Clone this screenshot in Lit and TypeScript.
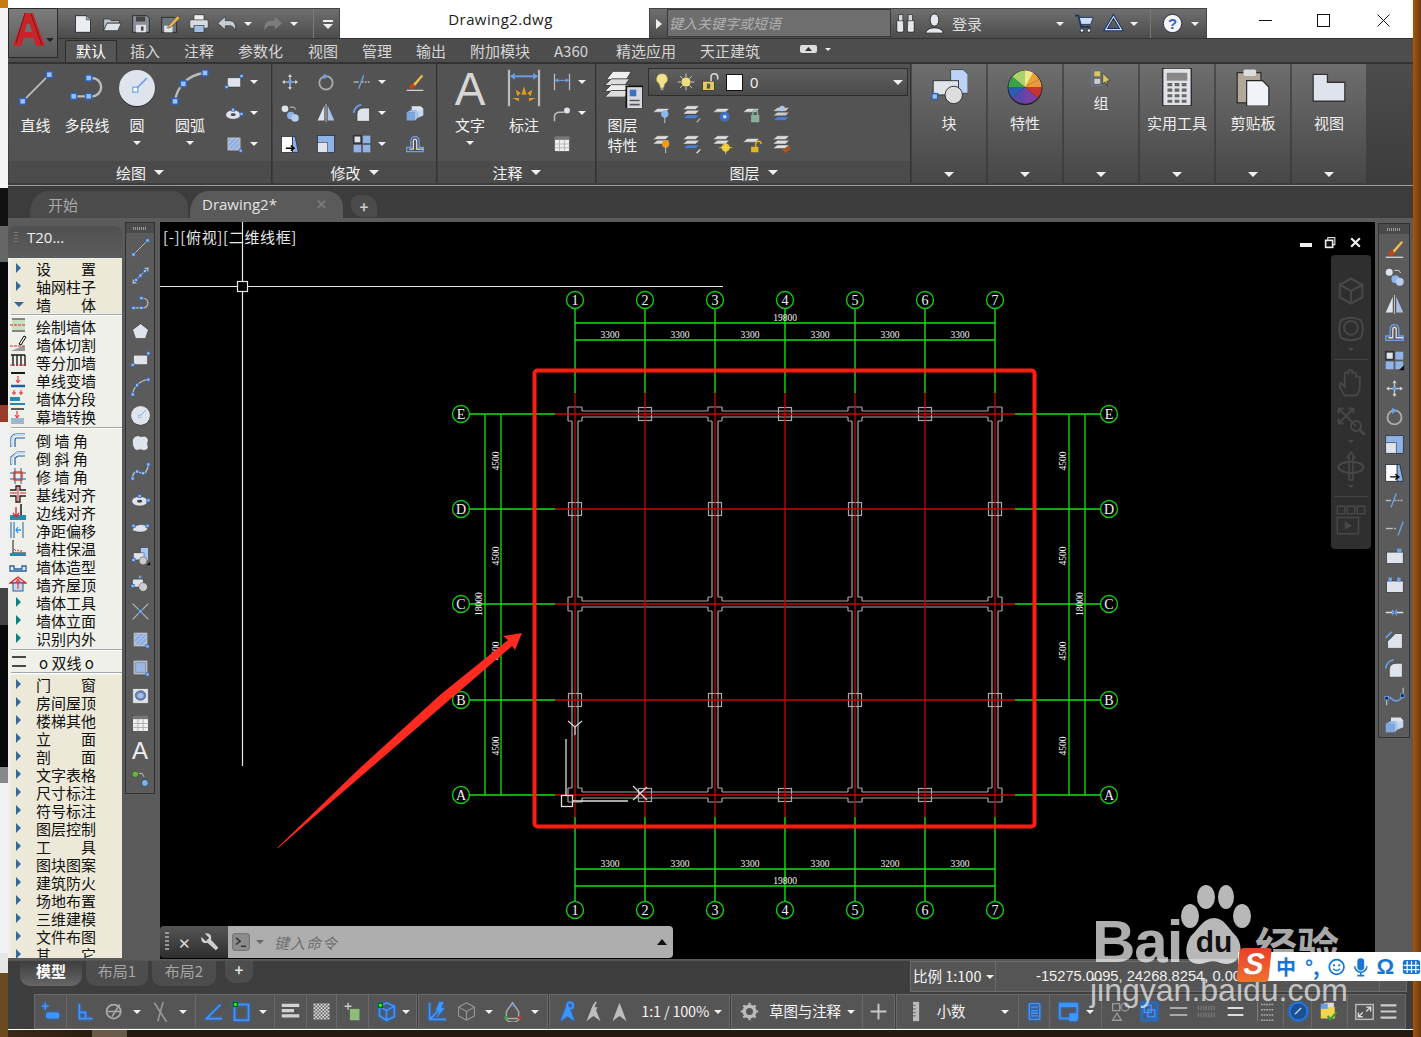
import { LitElement, html, css, svg } from "lit";
import { customElement } from "lit/decorators.js";

const BL = "#6b9fe8", LT = "#dfe3ec", GR = "#bcbcbc";
const grip = (x: number, y: number) => svg`<rect x=${x - 1.8} y=${y - 1.8} width="3.6" height="3.6" fill="#9cc0f5" stroke="#2f62b5" stroke-width=".9"/>`;
const slab = (y: number, c = "#ddd") => svg`<path d="M2 ${y}l5-4h13l-4 4z" fill=${c} stroke="#444" stroke-width=".5"/>`;

const ICONS: Record<string, any> = {
  line: svg`<path d="M4 20L20 4" stroke=${GR} stroke-width="1.1"/>${grip(4, 20)}${grip(20, 4)}`,
  xline: svg`<path d="M3 21L21 3" stroke=${GR} stroke-width="1.3"/><path d="M3 21v-5l5 5zM21 3v5l-5-5z" fill=${GR}/>${grip(12, 12)}${grip(7, 17)}${grip(17, 7)}`,
  pline: svg`<path d="M4 17H15A5.5 5.5 0 0 0 15 6" fill="none" stroke=${GR} stroke-width="1.4"/>${grip(4, 17)}${grip(13, 17)}${grip(13, 6)}`,
  circle: svg`<circle cx="12" cy="12.5" r="11" fill="#333"/><circle cx="12" cy="12" r="10.8" fill=${LT}/><path d="M11 13L18 6" stroke=${BL} stroke-width="1"/><rect x="9.5" y="11.5" width="3" height="3" fill="#fff" stroke=${BL} stroke-width=".7"/>`,
  arc: svg`<path d="M3 20C4 12 10 4 21 3" fill="none" stroke=${GR} stroke-width="1.4"/>${grip(3, 20)}${grip(8, 9.5)}${grip(21, 3)}`,
  rect: svg`<rect x="4" y="7" width="16" height="11" fill=${LT} stroke="#333" stroke-width=".6"/>${grip(3, 18)}${grip(21, 5)}`,
  ell: svg`<ellipse cx="11" cy="14" rx="9" ry="5.5" fill=${LT} stroke="#333" stroke-width=".6"/><ellipse cx="11" cy="14" rx="3" ry="1.6" fill="#444"/>${grip(11, 8)}${grip(21, 13)}`,
  ellarc: svg`<path d="M3 15C3 8 19 6 20 13 20 18 8 18 6 16" fill=${LT} stroke="#333" stroke-width=".6"/>${grip(4, 10)}${grip(20, 10)}`,
  hatch: svg`<rect x="5" y="5" width="14" height="14" fill="#8eaee0" stroke=${GR} stroke-width="1.6"/><path d="M5 11l6-6M5 17L17 5M8 19L19 8M14 19l5-5" stroke="#c9daf5" stroke-width=".9"/>${grip(20, 20)}`,
  region: svg`<rect x="5" y="5" width="14" height="14" fill="#7b97c8" stroke=${GR} stroke-width="1.8"/><rect x="7" y="7" width="10" height="10" fill="#9db7e2"/>${grip(20, 20)}`,
  wipe: svg`<rect x="3" y="4" width="18" height="17" rx="1" fill=${LT} stroke="#333" stroke-width=".6"/><ellipse cx="12" cy="12" rx="6" ry="5.5" fill="#5f86c2" stroke="#333" stroke-width=".5"/><ellipse cx="12" cy="12" rx="3.6" ry="3" fill=${LT} opacity=".6"/>`,
  polygon: svg`<path d="M12 3l9 7-3.4 10H6.4L3 10z" fill=${LT} stroke="#333" stroke-width=".6"/>`,
  cloud: svg`<path d="M6 4c3-2 5 0 7 0s5-1 7 2 0 4 0 6 2 5-1 7-5 0-7 0-5 2-7-1-2-4-2-6-1-4 1-6 1-2 2-2z" fill=${LT} stroke="#333" stroke-width=".6"/>`,
  spline: svg`<path d="M3 20C3 10 10 12 13 14S20 12 21 4" fill="none" stroke=${GR} stroke-width="1.7"/>${grip(3, 20)}${grip(8, 12)}${grip(15, 14)}${grip(21, 4)}`,
  insert: svg`<rect x="12" y="3" width="9" height="15" fill="#a9c6f2" stroke="#333" stroke-width=".5"/><rect x="4" y="9" width="12" height="8" fill=${LT} stroke="#333" stroke-width=".5"/><circle cx="15" cy="18" r="4.5" fill="#ccc" stroke="#333" stroke-width=".5"/>${grip(4, 17)}<path d="M19 23l4-4v4z" fill="#111"/>`,
  block: svg`<rect x="3" y="7" width="12" height="9" fill=${LT} stroke="#333" stroke-width=".5"/><circle cx="15" cy="16" r="5" fill="#ccc" stroke="#333" stroke-width=".5"/>${grip(3, 15)}<rect x="10" y="3" width="3" height="3" fill=${BL}/>`,
  point: svg`<path d="M3 21L21 3M3 3l18 18" stroke=${GR} stroke-width="1.2"/>${grip(12, 12)}`,
  table: svg`<rect x="3" y="3" width="18" height="18" fill="#efefef" stroke="#333" stroke-width=".7"/><rect x="3" y="3" width="18" height="4" fill="#777"/><path d="M3 12h18M3 16.500h18M9 7v14M15 7v14" stroke="#aaa" stroke-width="1"/>`,
  addsel: svg`<circle cx="6" cy="6" r="3.6" fill="#6db33f" stroke="#234" stroke-width=".6"/><path d="M10 5h4l2 4" fill="none" stroke="#ccc" stroke-width="1"/><circle cx="17" cy="16" r="4" fill="#7db0e8" stroke="#234" stroke-width=".8"/>`,
  move: svg`<path d="M12 2l3 4h-2v5h5V9l4 3-4 3v-2h-5v5h2l-3 4-3-4h2v-5H6v2l-4-3 4-3v2h5V6H9z" fill="#cdd2da" stroke="#333" stroke-width=".4"/><rect x="10" y="10" width="4" height="4" fill=${BL}/>`,
  rotate: svg`<circle cx="12" cy="13" r="8" fill="none" stroke="#aaa" stroke-width="2.2"/><path d="M9 2l6 3-6 4z" fill=${BL}/>`,
  trim: svg`<path d="M2 12h6" stroke=${GR} stroke-width="1.6"/><path d="M12 12h10" stroke=${GR} stroke-width="1.6" stroke-dasharray="2 1.5"/><path d="M8 20L14 4" stroke=${BL} stroke-width="1.6"/>`,
  extend: svg`<path d="M2 12h6" stroke=${GR} stroke-width="1.6"/><path d="M8 12h6" stroke=${GR} stroke-width="1.6" stroke-dasharray="2 1.5"/><path d="M16 20L22 4" stroke=${BL} stroke-width="1.6"/>`,
  brush: svg`<path d="M9 15L20 3l2 2-10 12z" fill="#e9c15d" stroke="#6d5216" stroke-width=".5"/><path d="M5 19c0-3 2-5 5-5l2 3c-1 3-5 4-7 2z" fill="#c8460e"/><path d="M2 22h20" stroke="#ddd" stroke-width="1.4"/>`,
  copy: svg`<circle cx="6" cy="7" r="4" fill=${LT}/><path d="M12 5h5l2 3" fill="none" stroke="#ddd" stroke-width="1"/><circle cx="13" cy="15" r="4.500" fill="#8fb3e6"/><circle cx="18" cy="18" r="4.500" fill="#b7cdf0"/>`,
  mirror: svg`<path d="M10 3v18H2z" fill=${LT}/><path d="M14 3v18h8z" fill="#a9bfe6"/><path d="M12 1v22" stroke="#bbb" stroke-width="1.2"/>`,
  fillet: svg`<path d="M6 22V14Q6 6 14 6H21V22z" fill=${LT} stroke="#333" stroke-width=".8"/><path d="M2 12Q3 4 11 2" fill="none" stroke=${BL} stroke-width="2"/>`,
  chamfer: svg`<path d="M4 21V13L13 4H21V21z" fill=${LT} stroke="#333" stroke-width=".8"/><path d="M2 9L9 2" stroke=${BL} stroke-width="2"/>`,
  solid: svg`<path d="M8 4h11l3 3-3 4H8z" fill=${LT}/><path d="M2 11l6-3h7l-3 3z" fill="#9dbbe8"/><path d="M2 11h10v10H2z" fill="#7ea6de"/><path d="M12 11l3-3v10l-3 3z" fill="#a9c6f2"/><path d="M15 10l7-3v8l-7 3z" fill="#c3d7f5"/>`,
  stretch: svg`<rect x="2" y="3" width="13" height="19" fill="#fff" stroke="#123" stroke-width=".8"/><path d="M15 3h3l4 19h-7z" fill="#8fb3e6" stroke="#123" stroke-width=".8"/><path d="M7 17h9M13 14l4 3-4 3" fill="none" stroke="#000" stroke-width="1.7"/>`,
  scale: svg`<rect x="2" y="2" width="20" height="20" fill="#8fb3e6" stroke="#123" stroke-width=".7"/><rect x="2" y="10" width="12" height="12" fill=${LT} stroke="#333" stroke-width=".7"/>`,
  array: svg`<rect x="2" y="2" width="9" height="9" fill=${LT} stroke="#333" stroke-width="2"/><rect x="13" y="2" width="9" height="9" fill="#8fb3e6"/><rect x="2" y="13" width="9" height="9" fill="#8fb3e6"/><rect x="13" y="13" width="9" height="9" fill="#8fb3e6"/>`,
  array2: svg`<rect x="2" y="2" width="9" height="9" fill=${LT} stroke="#333" stroke-width="2"/><rect x="13" y="2" width="9" height="9" fill="#8fb3e6"/><rect x="2" y="13" width="9" height="9" fill="#8fb3e6"/><rect x="13" y="13" width="9" height="9" fill="#8fb3e6"/><path d="M23 17v6h-6z" fill="#111"/>`,
  offset: svg`<path d="M2 21V16H7V9Q7 3 12 3t5 6v7h5v5z" fill="none" stroke=${BL} stroke-width="1.500"/><path d="M5 18H10V9Q10 6 12 6t2 3v9h8" fill="none" stroke="#ddd" stroke-width="1.500"/>`,
  brk: svg`<path d="M2 12h8M14 12h8" stroke="#ddd" stroke-width="1.6"/><path d="M9 8l4 4-4 4zM15 8l-4 4 4 4z" fill=${BL}/>`,
  joint: svg`<rect x="3" y="7" width="19" height="13" fill=${LT} stroke="#333" stroke-width=".8"/><rect x="15" y="3" width="5" height="5" fill=${BL}/>`,
  joint2: svg`<rect x="3" y="8" width="19" height="13" fill=${LT} stroke="#333" stroke-width=".8"/><rect x="5" y="4" width="4" height="5" fill=${BL}/><rect x="15" y="4" width="4" height="5" fill=${BL}/>`,
  blend: svg`<path d="M3 22v-6M22 2v6" stroke="#bbb" stroke-width="1.400"/><path d="M3 15C6 8 9 18 14 17S21 14 22 11" fill="none" stroke=${BL} stroke-width="1.800"/><rect x="1" y="12" width="4" height="4" fill="#124" stroke=${BL}/><rect x="19" y="9" width="4" height="4" fill="#124" stroke=${BL}/>`,
  dim: svg`<path d="M3 1v22M21 1v22" stroke=${GR} stroke-width="1.300"/><path d="M5 5h14" stroke=${BL} stroke-width="1.200"/><path d="M3.500 5l3-2v4zM20.500 5l-3-2v4z" fill=${BL}/><g fill="#e29b1e"><path d="M12 11l-1.500 5h3z"/><path d="M7 13l1 4 2-2z"/><path d="M17 13l-1 4-2-2z"/><path d="M5 18l4 2 0-2z"/><path d="M19 18l-4 2 0-2z"/></g>`,
  dims: svg`<path d="M3 2v20M21 2v20" stroke=${GR} stroke-width="1.500"/><path d="M4 10h16" stroke=${BL} stroke-width="1.300"/><path d="M3.500 10l4-2.500v5zM20.500 10l-4-2.500v5z" fill=${BL}/>`,
  leader: svg`<path d="M3 22V16Q3 12 8 11H15" fill="none" stroke=${GR} stroke-width="1.800"/><circle cx="18" cy="9" r="3.500" fill=${LT}/>`,
  layers: svg`<path d="M2 7l4-5h11l-3 5z" fill="#eee" stroke="#333" stroke-width=".5"/><path d="M1 10.500l4-4h11l-3 4z" fill="#ddd" stroke="#333" stroke-width=".5"/><path d="M1 14l4-4h11l-3 4z" fill="#eee" stroke="#333" stroke-width=".5"/><path d="M1 17.500l4-4h11l-3 4z" fill="#ddd" stroke="#333" stroke-width=".5"/><rect x="14" y="11" width="10" height="14" fill="#d6dae0" stroke="#111" stroke-width="1"/><rect x="16" y="13" width="4" height="4" fill="#3f6fc0"/><path d="M16 19.500h6M16 22h6" stroke="#555" stroke-width="1"/>`,
  bulb: svg`<path d="M12 1a7 7 0 0 0-4 13c1 2 1 4 2 6h4c1-2 1-4 2-6a7 7 0 0 0-4-13z" fill="#f2e28c" stroke="#9a8a30" stroke-width=".7"/><rect x="10" y="20" width="4" height="3" fill="#999"/>`,
  sun: svg`<circle cx="12" cy="12" r="5.500" fill="#f2dc7c"/><path d="M12 2v4M12 18v4M2 12h4M18 12h4M5 5l3 3M16 16l3 3M19 5l-3 3M8 16l-3 3" stroke="#ccc" stroke-width="1.200"/>`,
  lock: svg`<rect x="2" y="11" width="14" height="11" fill="#e4c95f" stroke="#222" stroke-width=".7"/><rect x="7" y="14" width="4" height="6" fill="#555"/><path d="M12 11V6a4 4 0 0 1 8 0v3" fill="none" stroke="#ddd" stroke-width="1.800"/>`,
  block2: svg`<path d="M13 1h8l3 3v12H13z" fill="#bcd3f5" stroke="#444" stroke-width=".6"/><rect x="2" y="8" width="16" height="9" fill=${LT} stroke="#333" stroke-width=".6"/><circle cx="15" cy="17" r="5.500" fill="#ddd" stroke="#333" stroke-width=".6"/>${grip(3, 18)}`,
  wheel: svg`<circle cx="12" cy="12.500" r="11" fill="#222"/><path d="M12 12L12 1.500A10.500 10.500 0 0 1 21 7z" fill="#e9a13a"/><path d="M12 12L21 7A10.500 10.500 0 0 1 22.500 12z" fill="#ea9a3a"/><path d="M12 12H22.500A10.500 10.500 0 0 1 20 19z" fill="#c8342e"/><path d="M12 12L20 19A10.500 10.500 0 0 1 12 22.500z" fill="#7a3fa5"/><path d="M12 12V22.500A10.500 10.500 0 0 1 4 19z" fill="#5a48a8"/><path d="M12 12L4 19A10.500 10.500 0 0 1 1.500 12z" fill="#2c5bb5"/><path d="M12 12H1.500A10.500 10.500 0 0 1 4 5.500z" fill="#3aa34a"/><path d="M12 12L4 5.500A10.500 10.500 0 0 1 12 1.500z" fill="#a7d36a"/><path d="M12 12L12 1.500A10.500 10.500 0 0 1 17 3z" fill="#efe88a"/>`,
  group: svg`<rect x="1" y="1" width="13" height="20" fill="none" stroke=${BL} stroke-width=".7" stroke-dasharray="1 1"/><rect x="4" y="4" width="7" height="6" fill="#d8c65e"/><rect x="4" y="13" width="7" height="6" fill="#ccc"/><path d="M14 6l9 9-4 1 1 6-3-5-3 2z" fill="#d8c65e" stroke="#123" stroke-width=".7"/>`,
  calc: svg`<rect x="3" y="0" width="18" height="24" rx="1" fill="#dfe2e6" stroke="#222" stroke-width=".8"/><rect x="5.500" y="3" width="13" height="5" fill="#888"/><path d="M6 10.500h3M10.500 10.500h3M15 10.500h3M6 14h3M10.500 14h3M15 14h3M6 17.500h3M10.500 17.500h3M15 17.500h3M6 21h3M10.500 21h3M15 21h3" stroke="#666" stroke-width="2"/>`,
  clip: svg`<rect x="2" y="3" width="15" height="19" fill="#b1a899" stroke="#222" stroke-width=".7"/><rect x="6" y="1" width="8" height="4" rx="1" fill="#ddd"/><path d="M8 8h10l4 4v12H8z" fill="#f0f3f8" stroke="#222" stroke-width=".7"/>`,
  folder: svg`<path d="M2 4H11V9H22V21H2z" fill=${LT} stroke="#333" stroke-width=".8"/>`,
  newf: svg`<path d="M3 2h13l5 5v15H3z" fill="#e9edf2" stroke="#222" stroke-width="1"/><path d="M16 2v5h5" fill="#aaa" stroke="#222" stroke-width=".7"/>`,
  open: svg`<path d="M2 6h7l2 2h10v3H6L2 20z" fill="#bfc6ce" stroke="#222" stroke-width=".8"/><path d="M6 11h17l-4 9H2z" fill="#dfe3e8" stroke="#222" stroke-width=".8"/>`,
  save: svg`<path d="M2 2h17l3 3v17H2z" fill="#8a8f98" stroke="#222" stroke-width="1"/><rect x="6" y="3" width="11" height="6" fill="#444"/><rect x="6" y="13" width="12" height="9" fill="#dfe3e8"/><rect x="12" y="15" width="3" height="5" fill="#444"/>`,
  saveas: svg`<path d="M2 4h15l3 3v15H2z" fill="#6c7482" stroke="#222" stroke-width="1"/><rect x="5" y="14" width="10" height="8" fill="#dfe3e8"/><path d="M10 14L21 2l3 3-11 11-4 1z" fill="#e9b24a" stroke="#333" stroke-width=".6"/>`,
  print: svg`<rect x="6" y="1" width="12" height="7" fill="#eee" stroke="#222" stroke-width=".7"/><rect x="1" y="7" width="22" height="10" rx="2" fill="#d8dce2" stroke="#222" stroke-width=".7"/><rect x="6" y="14" width="12" height="8" fill="#9fbfe6" stroke="#222" stroke-width=".7"/>`,
  undo: svg`<path d="M1 11l9-8v5h5c6 0 8 5 7 12-2-5-4-6-7-6h-5v5z" fill="#c6ccd4" stroke="#222" stroke-width=".7"/>`,
  redo: svg`<path d="M23 11l-9-8v5H9c-6 0-8 5-7 12 2-5 4-6 7-6h5v5z" fill="#7c7c7c"/>`,
  binoc: svg`<rect x="2" y="8" width="8" height="14" rx="2" fill="#e6e8ee" stroke="#222"/><rect x="14" y="8" width="8" height="14" rx="2" fill="#e6e8ee" stroke="#222"/><rect x="4" y="2" width="5" height="7" fill="#d4d8e0" stroke="#222" stroke-width=".7"/><rect x="15" y="2" width="5" height="7" fill="#d4d8e0" stroke="#222" stroke-width=".7"/><rect x="9" y="9" width="6" height="5" fill="#555"/>`,
  person: svg`<ellipse cx="12" cy="8" rx="5" ry="7" fill="#e4e8ee" stroke="#222"/><path d="M2 23c1-5 6-6 10-6s9 1 10 6z" fill="#e4e8ee" stroke="#222"/>`,
  cart: svg`<path d="M1 3h4l3 13h11" fill="none" stroke="#12305f" stroke-width="1.800"/><path d="M6 5h16l-3 8H8z" fill="#cfdcf2" stroke="#12305f"/><circle cx="9" cy="20" r="2" fill="#fff" stroke="#123"/><circle cx="17" cy="20" r="2" fill="#fff" stroke="#123"/>`,
  tri: svg`<path d="M12 4L21 19H3z" fill="none" stroke="#12305f" stroke-width="3.500"/><path d="M12 4L21 19H3z" fill="none" stroke="#d3ddf0" stroke-width="1.300"/>`,
  help: svg`<circle cx="12" cy="12" r="10.500" fill="#f3f5fa" stroke="#223" stroke-width="1"/><text x="12" y="18" text-anchor="middle" font-family="Liberation Sans" font-weight="700" font-size="17" fill="#2f63c8">?</text>`,
  restore: svg`<rect x="7" y="3" width="13" height="13" fill="none" stroke="#eee" stroke-width="2"/><rect x="3" y="8" width="13" height="13" fill="#111" stroke="#eee" stroke-width="3"/>`,
  xx: svg`<path d="M4 4l16 16M20 4L4 20" stroke="#eee" stroke-width="4"/>`,
  sSnap: svg`<path d="M6 2v8M2 6h8" stroke="#3d95ff" stroke-width="1.800"/><rect x="7" y="13" width="15" height="7" rx="2" fill="#3d95ff"/>`,
  sOrtho: svg`<path d="M5 3v17h15M5 13h7v7" fill="none" stroke="#3d95ff" stroke-width="2"/>`,
  sPolar: svg`<circle cx="11" cy="12" r="8" fill="none" stroke="#aaa" stroke-width="2"/><path d="M4 12h16M9 18L18 4" stroke="#aaa" stroke-width="1.600"/>`,
  sX: svg`<path d="M5 2l14 22M15 1L9 23" stroke="#9a9a9a" stroke-width="1.800"/>`,
  sAng: svg`<path d="M20 4L4 20h18" fill="none" stroke="#3d95ff" stroke-width="2"/>`,
  sBox: svg`<rect x="4" y="4" width="16" height="18" fill="none" stroke="#3d95ff" stroke-width="2"/><rect x="2" y="1" width="6" height="6" fill="#060"/><rect x="3.500" y="2.500" width="3" height="3" fill="#3f3"/>`,
  sLines: svg`<path d="M2 5h20M2 11h14M2 17h20" stroke="#d2d2d2" stroke-width="3.500"/>`,
  sCheck: svg`<rect x="3" y="3" width="18" height="18" fill="#ddd"/><path d="M3 6h18M3 10h18M3 14h18M3 18h18M6 3v18M10 3v18M14 3v18M18 3v18" stroke="#666" stroke-width="2" stroke-dasharray="2 2"/>`,
  sStack: svg`<path d="M7 2v8M3 6h8" stroke="#ccc" stroke-width="1.500"/><rect x="9" y="9" width="11" height="13" fill="#8cbb7a"/>`,
  sBox3: svg`<path d="M4 6l8-4 9 4v12l-9 4-8-5z" fill="none" stroke="#3d95ff" stroke-width="1.800"/><path d="M4 6l8 5 9-5M12 11v11" fill="none" stroke="#3d95ff" stroke-width="1.600"/><rect x="2" y="2" width="6" height="6" fill="#060"/><rect x="3.500" y="3.500" width="3" height="3" fill="#3f3"/>`,
  sBolt: svg`<path d="M3 2v19h19M3 21L14 10" fill="none" stroke="#3d95ff" stroke-width="1.800"/><path d="M14 1l-4 10h4l-3 8 9-11h-4l3-7z" fill="#3d95ff"/>`,
  sCube: svg`<path d="M12 2l9 5v10l-9 5-9-5V7zM3 7l9 5 9-5M12 12v10" fill="none" stroke="#9a9a9a" stroke-width="1.200"/>`,
  sGiz: svg`<path d="M12 2l7 10v8H5v-8z" fill="none" stroke="#aaa" stroke-width="1.600"/><path d="M4 19a8 5 0 0 0 16 0" fill="none" stroke="#aaa" stroke-width="1.400"/><circle cx="4" cy="19" r="2" fill="#3a9a3a"/><circle cx="20" cy="19" r="2" fill="#c0392b"/><circle cx="12" cy="6" r="1.500" fill="#3d6fd0"/>`,
  sAnno1: svg`<path d="M12 3L4 23l8-6 8 6z" fill="#3d95ff"/><circle cx="15" cy="5" r="3.500" fill="none" stroke="#3d95ff" stroke-width="2"/>`,
  sAnno2: svg`<path d="M12 3L4 23l8-6 8 6z" fill="#bdbdbd"/><path d="M15 1l-4 7h4l-3 6" fill="none" stroke="#bdbdbd" stroke-width="2"/>`,
  sAnno3: svg`<path d="M12 2L4 23l8-6 8 6z" fill="#bdbdbd"/>`,
  sGear: svg`<circle cx="12" cy="12" r="6" fill="none" stroke="#bbb" stroke-width="4"/><path d="M12 2v4M12 18v4M2 12h4M18 12h4M5 5l3 3M16 16l3 3M19 5l-3 3M8 16l-3 3" stroke="#bbb" stroke-width="2.500"/>`,
  sPlus: svg`<path d="M12 3v18M3 12h18" stroke="#c8c8c8" stroke-width="2.200"/>`,
  sRuler: svg`<rect x="8" y="1" width="7" height="22" fill="#bbb"/><path d="M8 5h3M8 9h3M8 13h3M8 17h3" stroke="#555"/>`,
  sCalc: svg`<rect x="6" y="3" width="12" height="18" rx="1" fill="none" stroke="#3d95ff" stroke-width="1.600"/><path d="M8 7h8M8 11h8M8 14h8M8 17h8" stroke="#3d95ff" stroke-width="1.500"/>`,
  sWin: svg`<rect x="2" y="3" width="20" height="17" fill="none" stroke="#3d95ff" stroke-width="2"/><rect x="2" y="3" width="20" height="4" fill="#3d95ff"/><rect x="13" y="14" width="9" height="9" fill="#3d95ff"/>`,
  sIso: svg`<rect x="3" y="3" width="8" height="8" fill="none" stroke="#9a9a9a" stroke-width="1.500"/><circle cx="17" cy="7" r="4.500" fill="none" stroke="#9a9a9a" stroke-width="1.500"/><path d="M8 14l5 8H3z" fill="none" stroke="#9a9a9a" stroke-width="1.500"/>`,
  sSel: svg`<rect x="3" y="2" width="18" height="20" fill="none" stroke="#1d6fd1" stroke-width="1.600"/><rect x="6" y="5" width="8" height="8" fill="none" stroke="#3d95ff" stroke-width="1.500"/><rect x="10" y="10" width="8" height="8" fill="none" stroke="#3d95ff" stroke-width="1.500"/>`,
  sL2: svg`<path d="M2 8h20M2 16h20" stroke="#aaa" stroke-width="2.500"/>`,
  sL3: svg`<path d="M2 8h20M2 16h20" stroke="#777" stroke-width="5" stroke-dasharray="1.500 1.500"/>`,
  sL4: svg`<path d="M3 8h18M3 16h18" stroke="#ddd" stroke-width="2.500"/>`,
  sL5: svg`<path d="M8 4h14M8 10h14M8 16h14M8 22h14" stroke="#aaa" stroke-width="1.500" stroke-dasharray="2 1"/><path d="M4 1v22" stroke="#888"/>`,
  sDone: svg`<circle cx="12" cy="12" r="10" fill="#1b4f96" stroke="#1d7bf0" stroke-width="1.800"/><path d="M8 15l7-7" stroke="#cfe2ff" stroke-width="1.500"/>`,
  sUpd: svg`<path d="M6 2h11v17H6z" fill="#ddd"/><rect x="2" y="7" width="16" height="13" fill="#f0d44c"/><rect x="2" y="3" width="8" height="6" fill="#6a9ee2"/><path d="M10 17l3 4 7-8" fill="none" stroke="#3c9a2e" stroke-width="2.500"/>`,
  sFull: svg`<rect x="2" y="4" width="20" height="17" fill="none" stroke="#bbb" stroke-width="1.600"/><path d="M5 18l5-5M5 13v5h5M19 7l-5 5M14 7h5v5" fill="none" stroke="#ddd" stroke-width="1.600"/>`,
  sMenu: svg`<path d="M3 5h18M3 12h18M3 19h18" stroke="#ccc" stroke-width="2.500"/>`,
  cmd: svg`<rect x="2" y="2" width="20" height="20" rx="2" fill="#8c8c8c" stroke="#666"/><path d="M6 7l5 4-5 4M12 17h6" fill="none" stroke="#333" stroke-width="1.800"/>`,
  wrench: svg`<path d="M2 6l5 5 4-4-5-5c4-2 9 2 7 7l9 10-3 3-10-9C4 15 0 10 2 6z" fill="#cfcfcf"/>`,
  navCube: svg`<path d="M12 2l9 5v10l-9 5-9-5V7zM3 7l9 5 9-5M12 12v10" fill="none" stroke="#474747" stroke-width="1.700"/>`,
  navWheel: svg`<path d="M4 5Q12 1 20 5 23 12 20 19 12 23 4 19 1 12 4 5z" fill="none" stroke="#474747" stroke-width="1.600"/><circle cx="12" cy="11" r="5.500" fill="none" stroke="#474747" stroke-width="1.600"/>`,
  navHand: svg`<path d="M7 22C3 16 2 13 4 12l3 3V5a1.500 1.500 0 0 1 3 0V3a1.500 1.500 0 0 1 3 0v2a1.500 1.500 0 0 1 3 0v3a1.500 1.500 0 0 1 3 0v7c0 4-2 6-3 7z" fill="none" stroke="#474747" stroke-width="1.500"/>`,
  navZoom: svg`<path d="M2 2l14 14M14 2L2 14M2 2v4M2 2h4M14 2h-4M14 2v4M2 14v-4M2 14h4" fill="none" stroke="#474747" stroke-width="1.600"/><circle cx="16" cy="16" r="4" fill="none" stroke="#474747" stroke-width="1.600"/><path d="M19 19l4 4" stroke="#474747" stroke-width="2.500"/>`,
  navOrbit: svg`<path d="M12 1l3 4h-1.500v18h-3V5H9z" fill="none" stroke="#474747" stroke-width="1.400"/><ellipse cx="12" cy="13" rx="10" ry="4.500" fill="none" stroke="#474747" stroke-width="1.600"/>`,
  navMotion: svg`<rect x="1" y="1" width="6" height="6" fill="none" stroke="#474747" stroke-width="1.200"/><rect x="9" y="1" width="6" height="6" fill="none" stroke="#474747" stroke-width="1.200"/><rect x="17" y="1" width="6" height="6" fill="none" stroke="#474747" stroke-width="1.200"/><rect x="1" y="10" width="17" height="13" fill="none" stroke="#474747" stroke-width="1.200"/><path d="M7 13l6 3.500-6 3.500z" fill="#474747"/>`,
};

const lay = (badge: any, c = "#ddd") => svg`${slab(10, c)}${badge}`;
ICONS.l1 = lay(svg`<circle cx="15" cy="12" r="4" fill="#8ab8ea"/><path d="M15 15v7" stroke="#ccc"/>`);
ICONS.l2 = svg`${slab(7)}${slab(12)}${slab(17, "#4d7fd0")}<path d="M17 21l4-4" stroke="#aaa" stroke-width="1.500"/>`;
ICONS.l3 = lay(svg`<circle cx="15" cy="15" r="5.500" fill="#3f6fc0"/><circle cx="15" cy="15" r="2" fill="#cfe0ff"/>`);
ICONS.l4 = lay(svg`<rect x="11" y="13" width="9" height="8" fill="#8ab09a"/><path d="M13 13v-3a2.500 2.500 0 0 1 5 0v3" fill="none" stroke="#8ab09a" stroke-width="1.500"/>`);
ICONS.l5 = svg`${slab(9, "#ccc")}${slab(14, "#ccc")}${slab(19, "#4d7fd0")}<circle cx="12" cy="6" r="3" fill="#a8c7f0"/>`;
ICONS.l6 = svg`${slab(7)}${slab(12)}<circle cx="16" cy="12" r="4" fill="#f09a1c"/><path d="M16 15v7" stroke="#ccc"/>`;
ICONS.l7 = svg`${slab(7)}${slab(12)}${slab(17, "#4d7fd0")}<path d="M17 22l4-4" stroke="#ddd" stroke-width="1.500"/>`;
ICONS.l8 = svg`${slab(7)}${slab(12)}<circle cx="16" cy="16" r="4.500" fill="#f5c518"/><path d="M16 9v14M9 16h14" stroke="#ddd" stroke-width=".8"/>`;
ICONS.l9 = lay(svg`<rect x="11" y="15" width="8" height="6" fill="#e2b520"/><path d="M16 15v-3a3 3 0 0 1 6 0" fill="none" stroke="#e2b520" stroke-width="1.500"/>`);
ICONS.l10 = svg`${slab(7)}${slab(12)}${slab(17)}<path d="M12 18l8-4 2 3-6 5z" fill="#a5561c"/>`;

const GLOW = new Set(["sSnap", "sOrtho", "sAng", "sBox", "sBox3", "sBolt", "sAnno1", "sCalc", "sWin", "sSel", "sDone"]);
const I = (n: string, s = 24) => html`<svg class="ic ${GLOW.has(n) ? "glow" : ""}" width=${s} height=${s} viewBox="0 0 24 24" aria-hidden="true">${ICONS[n]}</svg>`;
const caret = html`<i class="caret"></i>`;

const S = (body: any) => html`<svg class="ic" width="18" height="18" viewBox="0 0 18 18" aria-hidden="true">${body}</svg>`;
const W = "#1a1a1a", R = "#e02030", B2 = "#1f5fa8", T = "#2a88a8";
const WALL: Record<string, any> = {
  w1: svg`<path d="M3 2h13M3 14h13" stroke=${W} stroke-width="1.200"/><rect x="3" y="3" width="13" height="10" fill="#c7e0c0"/><path d="M1 8h16" stroke=${R} stroke-dasharray="3 1"/>`,
  w2: svg`<path d="M2 16L16 10V16z" fill="#9a9a9a"/><path d="M10 9L15 1l2 1-5 8z" fill="#fff" stroke="#000"/><path d="M1 11h14" stroke=${R} stroke-dasharray="3 1"/>`,
  w3: svg`<path d="M2 2h14M4 2v11M8 2v11M12 2v11M16 2v11" stroke=${W} stroke-width="1.400"/><path d="M1 12h16" stroke=${R} stroke-dasharray="2 1"/>`,
  w4: svg`<path d="M2 2h14" stroke=${W} stroke-width="2"/><path d="M9 5v6M7 9l2 3 2-3" stroke=${R} fill="none"/><path d="M2 15h14" stroke=${B2} stroke-width="2.500"/>`,
  w5: svg`<path d="M1 8h10v4H1zM1 14h15v2H1z" fill=${T}/><path d="M5 1v5M12 1v5M3 4h4M10 4h4" stroke=${R}/>`,
  w6: svg`<path d="M2 2h13" stroke=${W} stroke-width="1.400"/><path d="M8 4v6M6 8l2 3 2-3" stroke=${R} fill="none"/><path d="M2 12h13M2 14h13M2 16h13" stroke=${B2} stroke-width=".8"/>`,
  c1: svg`<path d="M2 16V8Q2 3 8 3h8M6 16V9Q6 7 8 7h8" fill="none" stroke=${B2} stroke-width="1.200"/><path d="M3 15V9Q3 4 8 4h8" fill="none" stroke="#c8daea" stroke-width="2"/>`,
  c2: svg`<path d="M2 16V8L8 3h8M6 16V9L9 7h7" fill="none" stroke=${B2} stroke-width="1.200"/><path d="M3 15V9L8 4h8" fill="none" stroke="#c8daea" stroke-width="2"/>`,
  c3: svg`<path d="M1 6h16M1 12h16M6 1v16M12 1v16" stroke=${B2}/><rect x="5" y="5" width="8" height="8" fill="none" stroke="#f03010" stroke-width="1.300"/>`,
  c4: svg`<path d="M1 5h6V1h4v4h6M1 11h6v6h4v-6h6" fill="none" stroke=${W} stroke-width="1.300"/><path d="M1 8h7M11 8h6M9 1v16" stroke=${R}/>`,
  c5: svg`<path d="M1 12h16v5H1z" fill=${T}/><path d="M12 1v11" stroke=${W} stroke-width="1.500"/><path d="M7 4v9M4 10l3 4 3-4" stroke=${R} fill="none" stroke-width="1.300"/>`,
  c6: svg`<path d="M2 1v16M5 1v16M14 1v16" stroke=${B2}/><path d="M7 9h5M9 6l-2 3 2 3" stroke="#2196f3" fill="none" stroke-width="1.300"/>`,
  c7: svg`<path d="M4 1v13h13" fill="none" stroke=${W}/><path d="M1 14h16v3H1z" fill=${T}/><path d="M5 10l2 2M8 11l2 1M11 12l2 0" stroke=${R}/>`,
  c8: svg`<path d="M1 14V9h4v3h8V9h4v5z" fill="none" stroke=${B2} stroke-width="1.300"/>`,
  c9: svg`<path d="M1 8L9 2l8 6z" fill="#f8d8d8" stroke=${R} stroke-width="1.300"/><rect x="4" y="8" width="10" height="8" fill="#cdd6e6" stroke=${B2}/><path d="M9 14V5M7 7l2-3 2 3" stroke=${R} fill="none"/>`,
  dbl: svg`<path d="M1 4h14M1 13h14" stroke="#111" stroke-width="1.300"/>`,
};

type Row = { k: "cat" | "down" | "tool" | "teal" | "sep" | "sepS" | "dbl"; t?: string; ic?: string; w?: number };
const cat = (t: string): Row => ({ k: "cat", t });
const tool = (t: string, ic: string, w = 60): Row => ({ k: "tool", t, ic, w });
const ROWS: Row[] = [
  cat("设置"), cat("轴网柱子"), { k: "down", t: "墙体" }, { k: "sepS" },
  tool("绘制墙体", "w1"), tool("墙体切割", "w2"), tool("等分加墙", "w3"), tool("单线变墙", "w4"), tool("墙体分段", "w5"), tool("幕墙转换", "w6"),
  { k: "sep" },
  tool("倒墙角", "c1", 52), tool("倒斜角", "c2", 52), tool("修墙角", "c3", 52), tool("基线对齐", "c4"), tool("边线对齐", "c5"), tool("净距偏移", "c6"), tool("墙柱保温", "c7"), tool("墙体造型", "c8"), tool("墙齐屋顶", "c9"),
  { k: "teal", t: "墙体工具" }, { k: "teal", t: "墙体立面" }, { k: "teal", t: "识别内外" },
  { k: "sep" }, { k: "dbl" }, { k: "sepS" },
  ...["门窗", "房间屋顶", "楼梯其他", "立面", "剖面", "文字表格", "尺寸标注", "符号标注", "图层控制", "工具", "图块图案", "建筑防火", "场地布置", "三维建模", "文件布图", "其它"].map(cat),
];

const LEFT_TOOLS = ["line", "xline", "pline", "polygon", "rect", "arc", "circle", "cloud", "spline", "ell", "ellarc", "insert", "block", "point", "hatch", "region", "wipe", "table", "TXT", "addsel"];
const RIGHT_TOOLS = ["brush", "copy", "mirror", "offset", "array2", "move", "rotate", "scale", "stretch", "trim", "extend", "joint", "joint2", "brk", "chamfer", "fillet", "blend", "solid"];

type Cell = { w: number; items: (string | { tx: string; mr?: number; ml?: number } | null)[] };
const STATUS: Cell[][] = [
  [{ w: 32, items: ["sSnap"] }, { w: 129, items: ["sOrtho", "sPolar", null, "sX", null] }, { w: 79, items: ["sAng", "sBox", null] }, { w: 32, items: ["sLines"] }, { w: 30, items: ["sCheck"] }, { w: 32, items: ["sStack"] }, { w: 49, items: ["sBox3", null] }],
  [{ w: 130, items: ["sBolt", "sCube", null, "sGiz", null] }],
  [{ w: 181, items: ["sAnno1", "sAnno2", "sAnno3", { tx: "1:1 / 100%", ml: 6 }, null] }],
  [{ w: 131, items: ["sGear", { tx: "草图与注释", ml: 3 }, null] }, { w: 33, items: ["sPlus"] }],
  [{ w: 122, items: ["sRuler", { tx: "小数", mr: 26 }, null] }, { w: 31, items: ["sCalc"] }, { w: 52, items: ["sWin", null] }, { w: 182, items: ["sIso", "sSel", "sL2", "sL3", "sL4", "sL5"] }, { w: 28, items: ["sDone"] }, { w: 36, items: ["sUpd"] }, { w: 59, items: ["sFull", "sMenu"] }],
];

const XS = [575, 645, 715, 785, 855, 925, 995];
const YS = [414, 509, 604, 700, 795];
const LET = ["E", "D", "C", "B", "A"];
const WX = [575, 715, 855, 995];
const WY = [414, 604, 795];

function drawing() {
  const g = "#14e014", r = "#c40808", w = "#a8a8a8", t = "#f2f2f2";
  const bubble = (x: number, y: number, s: string) => svg`<circle cx=${x} cy=${y} r="8.500" fill="#000" stroke="#12c812" stroke-width="1.400"/><text x=${x} y=${y + 5} text-anchor="middle" class="bub" fill=${t}>${s}</text>`;
  const dimx = (x: number, y: number, s: string) => svg`<text x=${x} y=${y} text-anchor="middle" class="dm" fill=${t}>${s}</text>`;
  const dimy = (x: number, y: number, s: string) => svg`<text transform="translate(${x} ${y}) rotate(-90)" text-anchor="middle" class="dm" fill=${t}>${s}</text>`;
  const joint = (x: number, y: number) => {
    const a = 7, o = 3;
    const up = y > YS[0] + 1, dn = y < YS[4], lf = x > WX[0] + 1, rt = x < WX[3];
    const h = (yy: number, open: boolean) => open ? `M${x - a} ${yy}H${x - o}M${x + o} ${yy}H${x + a}` : `M${x - a} ${yy}H${x + a}`;
    const v = (xx: number, open: boolean) => open ? `M${xx} ${y - a}V${y - o}M${xx} ${y + o}V${y + a}` : `M${xx} ${y - a}V${y + a}`;
    return svg`<rect x=${x - a} y=${y - a} width=${2 * a} height=${2 * a} fill="#000"/><path d=${h(y - a, up) + h(y + a, dn) + v(x - a, lf) + v(x + a, rt)} fill="none" stroke=${w} stroke-width="1.200"/>`;
  };
  const column = (x: number, y: number) => svg`<rect x=${x - 6.5} y=${y - 6.5} width="13" height="13" fill="none" stroke=${w} stroke-width="1.200"/>`;
  return svg`
    ${XS.map((x) => svg`<path d="M${x} 308V393M${x} 817V902" stroke=${g} stroke-width="1.400"/>`)}
    ${YS.map((y) => svg`<path d="M470 ${y}H555M1015 ${y}H1100" stroke=${g} stroke-width="1.400"/>`)}
    <path d="M575 323H995M575 340H995M575 869H995M575 886H995M485 414V795M501 414V795M1069 414V795M1085 414V795" stroke=${g} stroke-width="1.300"/>
    ${WX.map((x) => svg`<path d="M${x - 3} 407V802M${x + 3} 407V802" stroke=${w} stroke-width="1.200"/>`)}
    ${WY.map((y) => svg`<path d="M568 ${y - 3}H1002M568 ${y + 3}H1002" stroke=${w} stroke-width="1.200"/>`)}
    ${WX.flatMap((x) => WY.map((y) => joint(x, y)))}
    ${WX.flatMap((x) => [509, 700].map((y) => column(x, y)))}
    ${[645, 785, 925].flatMap((x) => [414, 795].map((y) => column(x, y)))}
    ${XS.map((x) => svg`<path d="M${x} 393V817" stroke=${r} stroke-width="1.300"/>`)}
    ${YS.map((y) => svg`<path d="M555 ${y}H1015" stroke=${r} stroke-width="1.300"/>`)}
    ${XS.map((x, i) => svg`${bubble(x, 300, String(i + 1))}${bubble(x, 910, String(i + 1))}`)}
    ${YS.map((y, i) => svg`${bubble(461, y, LET[i])}${bubble(1109, y, LET[i])}`)}
    ${XS.slice(0, 6).map((x, i) => svg`${dimx(x + 35, 338, "3300")}${dimx(x + 35, 867, i === 4 ? "3200" : "3300")}`)}
    ${dimx(785, 321, "19800")}${dimx(785, 884, "19800")}
    ${[461, 556, 651, 746].map((y) => svg`${dimy(499, y, "4500")}${dimy(1066, y, "4500")}`)}
    ${dimy(482, 604, "18000")}${dimy(1083, 604, "18000")}
    <path d="M160 286.500H723M242.500 222V766" stroke="#e8e8e8" stroke-width="1.200"/>
    <rect x="237.500" y="281.500" width="10" height="10" fill="#000" stroke="#e8e8e8" stroke-width="1.200"/>
    <path d="M566 739V795M573 801H628" stroke="#ddd" stroke-width="1.300"/>
    <rect x="561.500" y="795.500" width="11" height="11" fill="none" stroke="#ddd" stroke-width="1.300"/>
    <path d="M568 721L575 727L582 721M575 727V735M633 786L647 800M647 787L633 800" fill="none" stroke="#ddd" stroke-width="1.200"/>
    <rect x="534.500" y="370.500" width="500" height="456" rx="3" fill="none" stroke="#ff1d12" stroke-width="4"/>
    <path d="M277 848L360 768 440 695 508 640 503 636 522 633 515 650 512 646 447 702 278 848z" fill="#ff2a20"/>
  `;
}

@customElement("app-root")
export class AppRoot extends LitElement {
  static styles = css`
    :host { display: block; width: 1421px; height: 1037px; position: relative; overflow: hidden; background: #241a10; font-family: "Noto Sans CJK SC", "Liberation Sans", sans-serif; font-size: 15px; line-height: 1; color: #eee; }
    .ic { display: block; flex: none; }
    .glow { filter: drop-shadow(0 0 1.500px #1a78ff); }
    .page { display: grid; grid-template-columns: 8px 1405px 8px; height: 1037px; }
    .edgeL { background: linear-gradient(#c87b10 0 8px, #f4f4f6 8px 188px, #111 188px 226px, #666 226px 262px, #090909 262px 405px, #9a3a28 405px 422px, #f0f0f0 422px 588px, #444 588px 625px, #090909 625px 767px, #888 767px 783px, #f2f2f2 783px 953px, #e6e6e6 953px 973px, #6b4a22 973px 1037px); }
    .edgeR { background: linear-gradient(90deg, #a9560c, #6b3a12); }
    .main { display: flex; flex-direction: column; background: #fff; padding-top: 8px; height: 1037px; box-sizing: border-box; }

    .title { height: 30px; display: flex; background: #fff; position: relative; }
    .qat { width: 332px; box-sizing: border-box; padding-left: 60px; display: flex; align-items: center; background: linear-gradient(#6f6f6f, #4c4c4c); border: 1px solid #444; border-bottom: 0; }
    .qat .slot { width: 30px; display: flex; justify-content: center; }
    .qat .mini { width: 22px; margin-left: -4px; display: flex; justify-content: center; }
    .qsep { width: 1px; height: 28px; background: #7c7c7c; margin: 0 8px 0 8px; }
    .docname { width: 309px; text-align: center; font-family: "Open Sans", "Liberation Sans", sans-serif; font-size: 15px; padding: 4px 0 0 12px; box-sizing: border-box; color: #1c1c1c; letter-spacing: .4px; }
    .search { width: 558px; display: flex; align-items: stretch; background: linear-gradient(#6f6f6f, #4c4c4c); border: 1px solid #444; border-bottom: 0; box-sizing: border-box; color: #e8e8e8; }
    .sarrow { width: 17px; display: flex; align-items: center; justify-content: center; }
    .sarrow i { border-left: 6px solid #eee; border-top: 5px solid transparent; border-bottom: 5px solid transparent; }
    .sinput { width: 224px; background: #6e6e6e; border: 1px solid #3a3a3a; font-style: italic; color: #b0b0b0; font-size: 14px; display: flex; align-items: center; padding-left: 1px; box-sizing: border-box; margin-bottom: 1px; }
    .sright { flex: 1; display: flex; align-items: center; padding-left: 4px; }
    .sright > * { flex: none; }
    .login { width: 106px; padding-left: 2px; margin-left: 5px; font-size: 15px; color: #ddd; box-sizing: border-box; }
    .bsp { margin-left: 8px; }
    .cart { margin-left: 10px; }
    .vline { width: 1px; height: 28px; background: #777; margin-left: 12px; }
    .hlp { margin-left: 11px; }
    .winbtns { flex: 1; position: relative; display: flex; align-items: center; padding-left: 52px; gap: 45px; }
    .wmin { width: 13px; height: 1px; background: #111; margin-bottom: 6px; }
    .wmax { width: 11px; height: 11px; border: 1px solid #111; margin-bottom: 6px; }
    .wcl { margin-bottom: 6px; margin-left: 2px; }
    .caret { display: block; flex: none; width: 0; height: 0; border-left: 4px solid transparent; border-right: 4px solid transparent; border-top: 4px solid #f0f0f0; }
    .pfoot .caret, .col .caret { border-left-width: 5px; border-right-width: 5px; border-top-width: 5px; }

    .logo { position: absolute; left: 8px; top: 8px; width: 50px; height: 50px; box-sizing: border-box; background: linear-gradient(#7c7c7c, #585858); border: 1px solid #2a2a2a; z-index: 3; }
    .logo svg { position: absolute; left: 3px; top: 3px; }
    .logo .caret { position: absolute; right: 3px; top: 29px; border-top-color: #222; }

    .tabs { height: 24px; background: #4d4d4d; border-top: 1px solid #333; box-sizing: border-box; display: flex; align-items: flex-end; padding-left: 57px; color: #d5d5d5; }
    .tab { height: 22px; display: flex; align-items: center; box-sizing: border-box; padding-bottom: 2px; }
    .tab.on { background: #555; border: 1px solid #2c2c2c; border-bottom: 0; border-radius: 2px 2px 0 0; color: #fff; justify-content: center; margin-right: 13px; }
    .tabx { margin: 0 0 7px 0; }

    .ribbon { height: 124px; display: flex; background: linear-gradient(#4c4c4c, #3c3c3c); border-top: 2px solid #333; border-bottom: 1px solid #999; box-sizing: border-box; padding: 0 0 2px 1px; gap: 1px; }
    .panel { display: flex; flex-direction: column; background: #535353; border-right: 1px solid #333; box-sizing: border-box; }
    .pbody { flex: 1; display: flex; position: relative; }
    .pfoot { height: 22px; display: flex; align-items: center; justify-content: center; gap: 8px; background: #4b4b4b; color: #f2f2f2; }
    .big { display: flex; flex-direction: column; align-items: center; padding-top: 4px; color: #f2f2f2; }
    .big .lb { margin-top: 9px; height: 19px; white-space: nowrap; }
    .big .lb2 { margin-top: 7px; line-height: 20px; text-align: center; width: 32px; }
    .big .caret { margin-top: 5px; }
    .smalls { display: grid; grid-template-rows: repeat(3, 31px); padding-top: 2px; }
    .smalls.mod { grid-template-columns: 36px 36px 53px 36px; padding-left: 7px; }
    .smalls > div { display: flex; align-items: center; gap: 6px; }
    .ml { margin-left: 6px; }
    .A { font-family: "Liberation Sans", sans-serif; font-size: 46px; line-height: 42px; color: #d6d6d6; height: 40px; }
    .combo { position: absolute; left: 51px; top: 4px; width: 260px; height: 28px; background: linear-gradient(#5f5f5f, #4a4a4a); border: 1px solid #2e2e2e; box-sizing: border-box; display: flex; align-items: center; padding-left: 4px; gap: 5px; color: #eee; }
    .swatch { width: 17px; height: 17px; background: #fff; border: 1px solid #111; box-sizing: border-box; }
    .zero { margin-left: 2px; font-family: "Liberation Sans", sans-serif; font-size: 15px; }
    .cdown { margin-left: auto; margin-right: 4px; border-left-width: 5px; border-right-width: 5px; border-top-width: 5px; }
    .lrow { position: absolute; left: 54px; display: flex; gap: 8px; }
    .lrow.a { top: 39px; }
    .lrow.b { top: 69px; }
    .col { width: 74px; flex: none; display: flex; flex-direction: column; align-items: center; padding: 4px 0 6px; box-sizing: border-box; background: linear-gradient(#6e6e6e, #474747); color: #eee; margin-right: 1px; }
    .col .lb { margin-top: 9px; }
    .col .lb.g { margin-top: 7px; }
    .col .sp { flex: 1; }

    .doc { height: 36px; background: linear-gradient(#3c3c3c 0 32px, #5c5c5c 32px); display: flex; align-items: flex-start; padding: 5px 0 0 22px; box-sizing: border-box; gap: 2px; }
    .dtab { height: 27px; border-radius: 18px 16px 0 0 / 22px 16px 0 0; display: flex; align-items: center; box-sizing: border-box; padding-left: 18px; color: #a8a8a8; background: #4b4b4b; }
    .dtab.on { background: #5a5a5a; color: #e2e2e2; font-family: "Open Sans", "Liberation Sans", sans-serif; padding-left: 12px; justify-content: space-between; padding-right: 16px; }
    .dtab .x { color: #7a7a7a; font-weight: 700; font-size: 13px; }
    .dplus { width: 26px; height: 22px; margin: 4px 0 0 6px; background: #4b4b4b; border-radius: 8px 12px 0 12px; color: #ccc; display: flex; align-items: center; justify-content: center; font-weight: 700; }

    .work { height: 738px; display: flex; background: #5a5a5a; }
    .t20 { width: 114px; flex: none; display: flex; flex-direction: column; height: 732px; overflow: hidden; padding-top: 4px; box-sizing: content-box; background: #5a5a5a; }
    .thead { height: 32px; flex: none; background: linear-gradient(#505050, #5c5c5c); display: flex; align-items: flex-start; padding: 4px 0 0 4px; gap: 5px; color: #eee; font-family: "Open Sans", "Liberation Sans", sans-serif; box-sizing: border-box; border-radius: 8px 8px 0 0; }
    .thead b { width: 4px; height: 12px; background: repeating-linear-gradient(#777 0 1px, transparent 1px 3px); margin: 2px 4px 0 2px; }
    .tlist { flex: none; background: #f0f0ea; padding-top: 1px; }
    .row { height: 18px; display: flex; align-items: center; color: #111; font-size: 15px; box-sizing: border-box; }
    .row.cat, .row.down { background: #ece9d8; margin-left: 3px; padding-left: 25px; position: relative; }
    .row.teal { padding-left: 28px; position: relative; }
    .row.tool { padding-left: 1px; }
    .row.tool .lab { margin-left: 9px; }
    .lab { display: flex; justify-content: space-between; width: 60px; }
    .row .tr { position: absolute; left: 5px; top: 4px; border-left: 5px solid #36689c; border-top: 5px solid transparent; border-bottom: 5px solid transparent; }
    .row.down .tr { left: 3px; top: 7px; border: 0; border-top: 5px solid #36689c; border-left: 5px solid transparent; border-right: 5px solid transparent; }
    .row.teal .tr { left: 8px; border-left-color: #0f8080; }
    .sep { height: 6px; margin-left: 3px; box-sizing: border-box; padding-top: 2px; }
    .sep i { display: block; border-top: 1px solid #a6a6a6; border-bottom: 1px solid #fff; height: 2px; box-sizing: border-box; }
    .sep.s { height: 4px; padding-top: 1px; }
    .row.dbl { padding-left: 3px; }
    .row.dbl span { margin-left: 10px; }

    .pal { flex: none; width: 30px; margin: 0 5px 0 3px; height: 572px; background: #5b5b5b; border: 1px solid #333; box-sizing: border-box; }
    .palR { width: 32px; margin: 1px 3px 0 3px; height: 515px; }
    .grip { height: 10px; background: #4a4a4a; display: flex; justify-content: center; align-items: center; }
    .grip b { width: 14px; height: 3px; background: repeating-linear-gradient(90deg, #999 0 1px, transparent 1px 2px); }
    .pt { height: 28px; display: flex; align-items: center; justify-content: center; color: #eee; font-family: "Liberation Sans", sans-serif; font-size: 24px; }

    .canvas { flex: none; width: 1215px; height: 737px; background: #000; position: relative; overflow: hidden; }
    .canvas > svg { display: block; }
    .bub { font-family: "Liberation Serif", serif; font-size: 14px; }
    .dm { font-family: "Liberation Serif", serif; font-size: 9.5px; }
    .vp { position: absolute; left: 3px; top: 7px; color: #e8e8e8; font-size: 15px; white-space: nowrap; letter-spacing: .65px; }
    .vc { position: absolute; right: 13px; top: 14px; display: flex; gap: 12px; align-items: center; }
    .vmin { width: 12px; height: 4px; background: #eee; margin-top: 4px; }
    .nav { position: absolute; left: 1171px; top: 33px; width: 40px; height: 294px; background: #2f2f2f; border-radius: 4px; display: flex; flex-direction: column; align-items: center; gap: 8px; padding-top: 21px; box-sizing: border-box; }
    .nav i { display: block; border-left: 3px solid transparent; border-right: 3px solid transparent; border-top: 3px solid #4a4a4a; margin-top: -4px; }
    .nav hr { width: 34px; border: 0; border-top: 1px solid #444; margin: 0; }
    .cmdl { position: absolute; left: 0; bottom: 1px; width: 513px; height: 32px; display: flex; }
    .cmdd { width: 68px; background: linear-gradient(#555, #2e2e2e); border-radius: 4px 0 0 4px; display: flex; align-items: center; gap: 9px; padding-left: 5px; box-sizing: border-box; color: #ddd; }
    .cmdd b { width: 4px; height: 20px; background: repeating-linear-gradient(#999 0 2px, transparent 2px 4px); }
    .cmdg { flex: 1; background: #aeaeae; border-radius: 0 4px 4px 0; display: flex; align-items: center; padding-left: 3px; gap: 5px; color: #6e6e6e; font-style: italic; }
    .cmdg .caret { border-top-color: #666; }
    .cmdg .up { margin-left: auto; margin-right: 6px; width: 0; height: 0; border-left: 5px solid transparent; border-right: 5px solid transparent; border-bottom: 6px solid #111; }
    .cmdg .ctx { margin-left: 5px; letter-spacing: 1px; }

    .lay { height: 32px; background: #3e3e3e; display: flex; align-items: flex-start; padding-left: 12px; gap: 4px; border-top: 1px solid #555; box-sizing: border-box; }
    .ltab { height: 25px; padding-bottom: 6px; box-sizing: border-box; background: #4d4d4d; border-radius: 0 0 10px 10px; display: flex; align-items: center; justify-content: center; color: #a5a5a5; }
    .ltab.on { background: linear-gradient(#3e3e3e, #666); color: #fff; font-weight: 700; }
    .lplus { width: 28px; height: 22px; margin-left: 5px; padding-bottom: 5px; box-sizing: border-box; background: #4d4d4d; border-radius: 0 0 10px 10px; display: flex; align-items: center; justify-content: center; color: #ddd; font-weight: 700; }
    .lsp { flex: 1; }
    .scale { width: 86px; height: 31px; background: #555; border: 1px solid #6c6c6c; display: flex; align-items: center; gap: 5px; padding-left: 2px; color: #f4f4f4; box-sizing: border-box; font-size: 14.5px; white-space: nowrap; margin-left: -4px; }
    .coord { width: 383px; height: 31px; background: #555; border-top: 1px solid #6c6c6c; border-bottom: 1px solid #6c6c6c; box-sizing: border-box; color: #f0f0f0; padding: 7px 0 0 40px; font-family: "Liberation Sans", sans-serif; font-size: 14.7px; white-space: nowrap; margin-left: -4px; }
    .cend { width: 28px; height: 31px; background: #555; border: 1px solid #6c6c6c; box-sizing: border-box; margin: 0 6px 0 -4px; }

    .status { height: 37px; background: #3e3e3e; display: flex; padding: 2px 0 0 26px; gap: 1px; box-sizing: border-box; }
    .sgroup { display: flex; border: 1px solid #6a6a6a; background: #555; height: 35px; box-sizing: border-box; flex: none; }
    .cell { display: flex; align-items: center; justify-content: space-around; border-right: 1px solid #6a6a6a; padding: 0 4px; box-sizing: border-box; color: #f2f2f2; font-size: 14.5px; white-space: nowrap; }
    .cell span { letter-spacing: -.2px; }
    .cell:last-child { border-right: 0; }
    .bot { height: 1px; background: #fff; flex: none; }
    .under { flex: 1; background: linear-gradient(90deg, #3a2a18, #2a1c10 6%, #6a5a48 6% 8.500%, #251a10 8.500%); }

    .wm { position: absolute; left: 1090px; top: 882px; width: 260px; height: 125px; color: rgba(255, 255, 255, .68); font-family: "Liberation Sans", sans-serif; pointer-events: none; z-index: 4; }
    .wm .bai { position: absolute; left: 2px; top: 30px; font-size: 60px; line-height: 60px; font-weight: 700; letter-spacing: -1px; }
    .wm .jy { position: absolute; left: 0; top: 90px; font-size: 32px; line-height: 36px; }
    .wm .ex { position: absolute; left: 165px; top: 40px; font-size: 42px; line-height: 46px; font-family: "Noto Sans CJK SC", sans-serif; font-weight: 700; }
    .wm svg { position: absolute; left: 86px; top: 2px; }
    .ime { position: absolute; left: 1238px; top: 952px; width: 183px; height: 29px; background: #fff; display: flex; align-items: center; z-index: 5; color: #1676d2; }
    .sg { position: absolute; left: 0; top: -4px; width: 32px; height: 34px; background: linear-gradient(#e8402a, #f07030); transform: skew(-6deg); border-radius: 4px; color: #fff; font: italic 700 30px/32px "Liberation Sans", sans-serif; text-align: center; }
    .ime .m { margin-left: 38px; font-size: 20px; font-weight: 700; }
    .ime .d { margin-left: 9px; font-size: 20px; font-weight: 700; }
    .ime svg { margin-left: 8px; }
    .ime .om { margin-left: 8px; font: 700 22px "Liberation Sans", sans-serif; }
  `;

  private big(ic: any, lb: string, w: number, arrow = false) {
    return html`<div class="big" style="width:${w}px">${ic}<div class="lb">${lb}</div>${arrow ? caret : ""}</div>`;
  }
  private sm(n: string, c = true) {
    return html`<div>${I(n, 20)}${c ? caret : ""}</div>`;
  }
  private label(t: string) {
    return html`<span class="lab">${[...t].map((c) => html`<span>${c}</span>`)}</span>`;
  }

  private rowT(r: Row) {
    if (r.k === "sep") return html`<div class="sep"><i></i></div>`;
    if (r.k === "sepS") return html`<div class="sep s"><i></i></div>`;
    if (r.k === "dbl") return html`<div class="row dbl">${S(WALL.dbl)}<span>o 双线 o</span></div>`;
    if (r.k === "tool") return html`<div class="row tool">${S(WALL[r.ic!])}<span class="lab" style="width:${r.w}px">${[...r.t!].map((c) => html`<span>${c}</span>`)}</span></div>`;
    return html`<div class="row ${r.k}"><i class="tr"></i>${this.label(r.t!)}</div>`;
  }

  render() {
    const tabs: [string, number, boolean?][] = [["默认", 52, true], ["插入", 54], ["注释", 54], ["参数化", 70], ["视图", 54], ["管理", 54], ["输出", 54], ["附加模块", 84], ["A360", 62], ["精选应用", 84], ["天正建筑", 100]];
    return html`
      <div class="page">
        <div class="edgeL"></div>
        <div class="main">
          <div class="title">
            <div class="qat">
              ${["newf", "open", "save", "saveas", "print"].map((n) => html`<div class="slot">${I(n, 20)}</div>`)}
              <div class="slot">${I("undo", 20)}</div><div class="mini">${caret}</div>
              <div class="slot">${I("redo", 20)}</div><div class="mini">${caret}</div>
              <div class="qsep"></div>
              <div class="mini"><svg class="ic" width="12" height="10" viewBox="0 0 12 10"><path d="M1 1h10v2H1z" fill="#eee"/><path d="M1 5h10L6 10z" fill="#eee"/></svg></div>
            </div>
            <div class="docname">Drawing2.dwg</div>
            <div class="search">
              <div class="sarrow"><i></i></div>
              <div class="sinput">键入关键字或短语</div>
              <div class="sright">
                ${I("binoc", 21)}
                <div class="bsp">${I("person", 21)}</div>
                <div class="login">登录</div>
                ${caret}
                <div class="cart">${I("cart", 21)}</div>
                <div class="bsp">${I("tri", 21)}</div>
                <div class="ml">${caret}</div>
                <div class="vline"></div>
                <div class="hlp">${I("help", 21)}</div>
                <div class="bsp">${caret}</div>
              </div>
            </div>
            <div class="winbtns">
              <div class="wmin"></div>
              <div class="wmax"></div>
              <svg class="wcl" width="13" height="13" viewBox="0 0 13 13"><path d="M.5.5l12 12M12.500.5l-12 12" stroke="#111"/></svg>
            </div>
          </div>

          <div class="tabs">
            ${tabs.map(([t, w, on]) => html`<div class="tab ${on ? "on" : ""}" style="width:${w}px">${t}</div>`)}
            <svg class="ic tabx" width="34" height="12" viewBox="0 0 34 12"><rect x="0" y="2" width="17" height="8" rx="2" fill="#ddd"/><path d="M5 8l3.500-4L12 8z" fill="#333"/><path d="M25 5h6l-3 3z" fill="#eee"/></svg>
          </div>

          <div class="ribbon">
            <div class="panel" style="width:263px">
              <div class="pbody">
                ${this.big(I("line", 40), "直线", 53)}
                ${this.big(I("pline", 40), "多段线", 50)}
                ${this.big(I("circle", 40), "圆", 50, true)}
                ${this.big(I("arc", 40), "圆弧", 56, true)}
                <div class="smalls ml">${this.sm("rect")}${this.sm("ell")}${this.sm("hatch")}</div>
              </div>
              <div class="pfoot">绘图 ${caret}</div>
            </div>
            <div class="panel" style="width:164px">
              <div class="pbody">
                <div class="smalls mod">
                  ${["move", "rotate"].map((n) => this.sm(n, false))}${this.sm("trim")}${this.sm("brush", false)}
                  ${["copy", "mirror"].map((n) => this.sm(n, false))}${this.sm("fillet")}${this.sm("solid", false)}
                  ${["stretch", "scale"].map((n) => this.sm(n, false))}${this.sm("array")}${this.sm("offset", false)}
                </div>
              </div>
              <div class="pfoot">修改 ${caret}</div>
            </div>
            <div class="panel" style="width:158px">
              <div class="pbody">
                ${this.big(html`<div class="A">A</div>`, "文字", 64, true)}
                ${this.big(I("dim", 40), "标注", 44)}
                <div class="smalls ml">${this.sm("dims")}${this.sm("leader")}${this.sm("table", false)}</div>
              </div>
              <div class="pfoot">注释 ${caret}</div>
            </div>
            <div class="panel" style="width:314px">
              <div class="pbody">
                <div class="big" style="width:51px">
                  ${I("layers", 40)}
                  <div class="lb2">图层 特性</div>
                </div>
                <div class="combo">
                  ${I("bulb", 18)}${I("sun", 20)}${I("lock", 20)}<span class="swatch"></span>
                  <span class="zero">0</span>
                  <i class="caret cdown"></i>
                </div>
                <div class="lrow a">${["l1", "l2", "l3", "l4", "l5"].map((n) => I(n, 22))}</div>
                <div class="lrow b">${["l6", "l7", "l8", "l9", "l10"].map((n) => I(n, 22))}</div>
              </div>
              <div class="pfoot">图层 ${caret}</div>
            </div>
            ${[["block2", "块"], ["wheel", "特性"], ["group", "组"], ["calc", "实用工具"], ["clip", "剪贴板"], ["folder", "视图"]].map(([n, t]) => html`
              <div class="col">${I(n, n === "group" ? 20 : 38)}<div class="lb ${n === "group" ? "g" : ""}">${t}</div><div class="sp"></div>${caret}</div>`)}
          </div>

          <div class="doc">
            <div class="dtab" style="width:158px">开始</div>
            <div class="dtab on" style="width:153px"><span>Drawing2*</span><span class="x">✕</span></div>
            <div class="dplus">+</div>
          </div>

          <div class="work">
            <div class="t20">
              <div class="thead"><b></b>T20...</div>
              <div class="tlist">${ROWS.map((r) => this.rowT(r))}</div>
            </div>
            <div class="pal">
              <div class="grip"><b></b></div>
              ${LEFT_TOOLS.map((n) => html`<div class="pt">${n === "TXT" ? "A" : I(n, 21)}</div>`)}
            </div>
            <div class="canvas">
              <svg width="1215" height="737" viewBox="160 222 1215 737" aria-hidden="true">${drawing()}</svg>
              <div class="vp">[-][俯视][二维线框]</div>
              <div class="vc"><div class="vmin"></div>${I("restore", 13)}${I("xx", 13)}</div>
              <div class="nav">
                ${I("navCube", 30)}${I("navWheel", 30)}<i></i><hr/>
                ${I("navHand", 30)}${I("navZoom", 30)}<i></i>
                ${I("navOrbit", 30)}<i></i><hr/>
                ${I("navMotion", 30)}
              </div>
              <div class="cmdl">
                <div class="cmdd"><b></b><span>✕</span>${I("wrench", 20)}</div>
                <div class="cmdg">${I("cmd", 20)}<i class="caret"></i><span class="ctx">键入命令</span><i class="up"></i></div>
              </div>
            </div>
            <div class="pal palR">
              <div class="grip"><b></b></div>
              ${RIGHT_TOOLS.map((n) => html`<div class="pt">${I(n, 21)}</div>`)}
            </div>
          </div>

          <div class="lay">
            <div class="ltab on" style="width:62px">模型</div>
            <div class="ltab" style="width:62px">布局1</div>
            <div class="ltab" style="width:64px">布局2</div>
            <div class="lplus">+</div>
            <div class="lsp"></div>
            <div class="scale">比例 1:100 ${caret}</div>
            <div class="coord">-15275.0095, 24268.8254, 0.0000</div>
            <div class="cend"></div>
          </div>

          <div class="status">
            ${STATUS.map((g) => html`<div class="sgroup">
              ${g.map((c, i) => html`<div class="cell" style="width:${i === g.length - 1 ? c.w - 2 : c.w}px">
                ${c.items.map((it) => it === null ? caret : typeof it === "string" ? I(it, 21) : html`<span style="margin:0 ${it.mr ?? 0}px 0 ${it.ml ?? 0}px">${it.tx}</span>`)}
              </div>`)}
            </div>`)}
          </div>
          <div class="bot"></div>
          <div class="under"></div>
        </div>
        <div class="edgeR"></div>
      </div>

      <div class="logo">
        <svg width="34" height="36" viewBox="0 0 34 36" aria-hidden="true">
          <path d="M13 1h8l12 33h-9l-2.500-8H12l-3 8H1z" fill="#c8252a"/>
          <path d="M14.500 12l-1.500 8h7l-2.500-8z" fill="#6f6f6f"/>
          <path d="M13 1l-9 30M19 2l11 31" stroke="#7a1418" stroke-width="1" fill="none"/>
        </svg>
        <i class="caret"></i>
      </div>

      <div class="wm">
        <svg width="76" height="88" viewBox="0 0 76 88" aria-hidden="true">
          <g fill="rgba(255,255,255,.72)">
            <ellipse cx="14" cy="32" rx="9" ry="12"/><ellipse cx="30" cy="13" rx="9" ry="12"/><ellipse cx="50" cy="13" rx="8" ry="12"/><ellipse cx="66" cy="32" rx="9" ry="12"/>
            <path d="M38 34c10 0 14 10 22 18 8 10 6 28-10 28-6 0-8-3-13-3s-8 3-14 3c-14 0-16-16-8-28 8-8 13-18 23-18z"/>
          </g>
          <text x="38" y="68" text-anchor="middle" font-family="Liberation Sans" font-weight="700" font-size="30" fill="#111">du</text>
        </svg>
        <div class="bai">Bai</div>
        <div class="ex">经验</div>
        <div class="jy">jingyan.baidu.com</div>
      </div>

      <div class="ime">
        <div class="sg">S</div>
        <span class="m">中</span>
        <span class="d">°,</span>
        <svg width="20" height="20" viewBox="0 0 20 20"><circle cx="10" cy="10" r="8.500" fill="none" stroke="#1676d2" stroke-width="2"/><circle cx="7" cy="8" r="1.300" fill="#1676d2"/><circle cx="13" cy="8" r="1.300" fill="#1676d2"/><path d="M6 12q4 4 8 0" fill="none" stroke="#1676d2" stroke-width="1.500"/></svg>
        <svg width="18" height="22" viewBox="0 0 18 22"><rect x="5" y="1" width="8" height="14" rx="4" fill="#1676d2"/><path d="M2 10a7 7 0 0 0 14 0M9 17v4M5 21h8" fill="none" stroke="#1676d2" stroke-width="1.800"/></svg>
        <span class="om">Ω</span>
        <svg width="22" height="20" viewBox="0 0 22 20"><rect x="1" y="2" width="20" height="16" rx="3" fill="#1676d2"/><path d="M6 3v14M11 3v14M16 3v14M2 8h18M2 13h18" stroke="#fff" stroke-width="1.400"/></svg>
      </div>
    `;
  }
}
